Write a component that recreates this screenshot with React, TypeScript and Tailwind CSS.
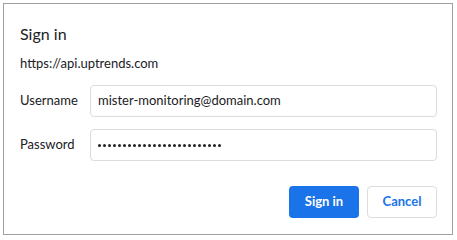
function Field({ label, children }: { label: string; children: React.ReactNode }) {
  return (
    <div className="flex items-center">
      <label className="w-[70px] shrink-0 text-[13px] text-[#202124]">{label}</label>
      <div className="flex h-[32px] flex-1 items-center rounded-[4px] border border-[#dadce0] px-[7px] text-[13px] text-[#202124]">
        {children}
      </div>
    </div>
  );
}

export default function App() {
  return (
    <div className="h-[240px] w-[457px] bg-white pl-[3px] pt-[3px] font-['Lato','Open_Sans',sans-serif]">
      <div className="flex h-[232px] w-[450px] flex-col border border-[#a0a0a0] pl-4 pr-[15px]">
        <h1 className="mt-[19px] text-[16px] leading-[22px] text-[#202124]">Sign in</h1>
        <p className="mt-[9px] text-[13px] leading-[18px] text-[#202124]">https://api.uptrends.com</p>
        <div className="mt-[13px] flex flex-col gap-[12px]">
          <Field label="Username">mister-monitoring@domain.com</Field>
          <Field label="Password">
            <div className="flex gap-[2px]">
              {Array.from({ length: 25 }).map((_, i) => (
                <span key={i} className="size-[3px] rounded-full bg-[#202124]" />
              ))}
            </div>
          </Field>
        </div>
        <div className="mt-[25px] flex justify-end gap-[8px]">
          <button className="h-[32px] w-[70px] rounded-[4px] bg-[#1a73e8] text-[13px] font-bold text-white">
            Sign in
          </button>
          <button className="h-[32px] w-[70px] rounded-[4px] border border-[#dadce0] bg-white text-[13px] font-bold text-[#1a73e8]">
            Cancel
          </button>
        </div>
      </div>
    </div>
  );
}
